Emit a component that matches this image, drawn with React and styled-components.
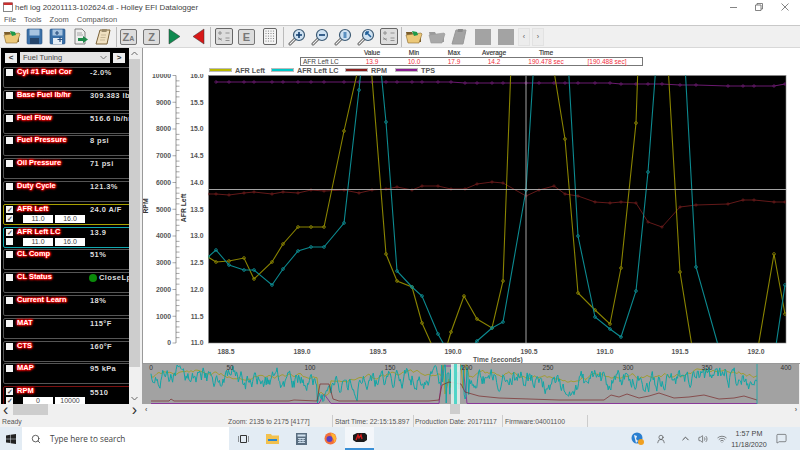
import React from 'react'
import styled, { createGlobalStyle } from 'styled-components'
import { ChevronUp, Volume2, Wifi, MessageSquare, Search, UserRound } from 'lucide-react'

const FONT = '"Liberation Sans", Arial, sans-serif'
const UI_FONT = '"Open Sans", "Noto Sans", sans-serif'

const GlobalStyle = createGlobalStyle`
  html, body { margin: 0; padding: 0; background: #f0f0f0; }
  #root { width: 800px; height: 450px; overflow: hidden; }
`

const Page = styled.div`
  width: 800px;
  height: 450px;
  display: flex;
  flex-direction: column;
  font-family: ${FONT};
  background: #f0f0f0;
  color: #333;
`
const TitleBar = styled.div`
  height: 14px;
  background: #fff;
  display: flex;
  align-items: center;
  padding: 0 2px 0 3px;
  font-size: 7.9px;
  color: #444;
`
const TitleText = styled.span`
  margin-left: 2px;
  flex: 1;
`
const WinButton = styled.div`
  width: 26px;
  height: 14px;
  display: flex;
  align-items: center;
  justify-content: center;
  color: #666;
`
const MenuBar = styled.div`
  height: 11px;
  background: #fff;
  display: flex;
  align-items: center;
  padding-left: 4px;
  gap: 8px;
  font-size: 7.5px;
  color: #555;
`
const Toolbar = styled.div`
  height: 21px;
  background: #f0f0f0;
  border-top: 1px solid #c8c8c8;
  border-bottom: 1px solid #d8d8d8;
  display: flex;
  align-items: center;
  box-sizing: content-box;
`
const ToolButton = styled.div`
  width: 23px;
  height: 20px;
  flex: none;
  display: flex;
  align-items: center;
  justify-content: center;
`
const ToolSep = styled.div`
  width: ${(p) => p.$w}px;
  height: 20px;
  flex: none;
  display: flex;
  justify-content: center;
  &::after {
    content: '';
    width: 1px;
    background: #bbb;
  }
`
const GreyKey = styled.div`
  width: 17px;
  height: 16px;
  box-sizing: border-box;
  border: 1px solid #777;
  border-radius: 2px;
  background: #ddd;
  color: #777;
  font: bold 11px ${FONT};
  display: flex;
  align-items: center;
  justify-content: center;
`
const SmallKeyText = styled.span`
  font-size: 7px;
  margin-top: 4px;
`
const DisabledSquare = styled.div`
  width: 16px;
  height: 16px;
  background: #a3a3a3;
`
const ArrowKey = styled.div`
  width: 12px;
  height: 18px;
  flex: none;
  margin-left: ${(p) => p.$ml}px;
  background: #ececec;
  border: 1px solid #e2e2e2;
  box-sizing: border-box;
  font: 7px ${FONT};
  color: #555;
  display: flex;
  align-items: center;
  justify-content: center;
`
const Body = styled.div`
  height: 367px;
  display: flex;
`
const LeftColumn = styled.div`
  width: 140px;
  flex: none;
  display: flex;
  flex-direction: column;
`
const LeftMain = styled.div`
  flex: 1;
  display: flex;
  min-height: 0;
`
const GaugePanel = styled.div`
  width: 128px;
  margin-left: 1px;
  flex: none;
  background: #000;
  overflow: hidden;
  display: flex;
  flex-direction: column;
`
const GaugeNav = styled.div`
  height: 19px;
  flex: none;
  display: flex;
  align-items: center;
  padding-left: 4px;
  box-sizing: border-box;
`
const NavButton = styled.div`
  width: 12px;
  height: 10px;
  flex: none;
  background: #eee;
  color: #333;
  font: bold 8px ${FONT};
  display: flex;
  align-items: center;
  justify-content: center;
`
const NavSelect = styled.div`
  width: 90px;
  height: 11px;
  margin: 0 3px;
  padding: 0 3px;
  flex: none;
  box-sizing: border-box;
  background: #e4e4e4;
  color: #444;
  font: 7.5px ${FONT};
  display: flex;
  align-items: center;
  justify-content: space-between;
`
const GaugeCard = styled.div`
  width: 135px;
  height: 21px;
  margin: 0 0 1.8px 2px;
  flex: none;
  box-sizing: border-box;
  border: 1px solid ${(p) => p.$border || '#555'};
  border-radius: 2px;
  padding-left: 2px;
  display: grid;
  grid-template-columns: 11px 73px auto;
  grid-template-rows: 10px 9px;
`
const CheckCol = styled.div`
  grid-row: 1 / 3;
  display: flex;
  flex-direction: column;
  gap: 2px;
  padding-top: 1px;
`
const Check = styled.div`
  width: 7px;
  height: 7px;
  background: #f4f4f4;
  color: #555;
  font: bold 7px/7px ${FONT};
  text-align: center;
`
const GaugeLabel = styled.div`
  font: bold 7.5px/8px ${FONT};
  color: #fff;
  white-space: nowrap;
  text-shadow: 0 0 1px #f00, 0 0 1px #f00, 0 0 2px #f00, 0 0 2px #f00, 0 0 3px #f00, 0 0 3px #f00, 0 0 3px #f00;
`
const GaugeValue = styled.div`
  font: bold 7.5px/${(p) => (p.$ranged ? '11px' : '14px')} ${FONT};
  letter-spacing: 0.4px;
  color: #ddd;
  white-space: nowrap;
  display: flex;
  align-items: center;
  gap: 2px;
`
const StatusDot = styled.span`
  width: 8px;
  height: 8px;
  border-radius: 50%;
  background: #0a8a0a;
  margin-left: -1px;
`
const RangeRow = styled.div`
  grid-column: 2 / 4;
  display: flex;
  gap: 2px;
  padding-left: 6px;
`
const RangeBox = styled.div`
  width: 30px;
  height: 8px;
  background: #fff;
  color: #444;
  font: 7px/8px ${FONT};
  text-align: center;
`
const VScroll = styled.div`
  width: 11px;
  flex: none;
  background: #f0f0f0;
  display: flex;
  flex-direction: column;
  align-items: center;
`
const ScrollArrow = styled.div`
  height: 11px;
  flex: none;
  display: flex;
  align-items: center;
  justify-content: center;
  color: #666;
  font: bold 7px ${FONT};
`
const VThumb = styled.div`
  width: 100%;
  height: 308px;
  margin-bottom: auto;
  background: #cdcdcd;
`
const HScroll = styled.div`
  height: 11px;
  flex: none;
  background: #f0f0f0;
  display: flex;
  align-items: center;
  justify-content: space-between;
  padding: 0 3px;
  position: relative;
`
const HThumb = styled.div`
  position: absolute;
  top: 0;
  bottom: 0;
  left: ${(p) => p.$left}px;
  width: ${(p) => p.$w}px;
  background: #cdcdcd;
`
const RightColumn = styled.div`
  flex: 1;
  display: flex;
  flex-direction: column;
  margin-left: 2px;
  min-width: 0;
`
const ChartPane = styled.div`
  height: 316px;
  flex: none;
  background: #fff;
  border-left: 1px solid #999;
  border-bottom: 1px solid #999;
  box-sizing: border-box;
  display: flex;
  flex-direction: column;
`
const StatsHead = styled.div`
  height: 9px;
  flex: none;
  display: flex;
  padding-left: 157px;
  font: 6.5px/9px ${FONT};
  color: #333;
  -webkit-text-stroke: 0.15px #333;
`
const StatCell = styled.div`
  width: ${(p) => p.$w}px;
  flex: none;
  text-align: ${(p) => p.$align || 'center'};
  color: ${(p) => p.$color || 'inherit'};
  padding-left: ${(p) => p.$pl || 0}px;
  box-sizing: border-box;
  white-space: nowrap;
`
const StatBox = styled.div`
  width: 343px;
  height: 9px;
  flex: none;
  margin-left: 157px;
  box-sizing: border-box;
  border: 1px solid #777;
  display: flex;
  align-items: center;
  font: 6.5px/7px ${FONT};
`
const Legend = styled.div`
  height: 8px;
  flex: none;
  padding-left: 66px;
  display: flex;
  align-items: center;
  font: bold 7.2px ${FONT};
  color: #555;
`
const LegendSwatch = styled.span`
  width: 23px;
  height: 4px;
  box-sizing: border-box;
  border: 1px solid #bbb;
  background: ${(p) => p.$color};
  margin-right: 3px;
`
const LegendText = styled.span`
  width: ${(p) => p.$w}px;
`
const ChartSvg = styled.svg`
  display: block;
  flex: none;
  font-family: ${FONT};
`
const Overview = styled.svg`
  display: block;
  flex: none;
  font-family: ${FONT};
`
const OverScroll = styled.div`
  height: 10px;
  flex: none;
  background: #f0f0f0;
  position: relative;
  display: flex;
  align-items: center;
  justify-content: space-between;
  padding: 0 3px;
  font: bold 7px ${FONT};
  color: #666;
`
const StatusBar = styled.div`
  height: 12px;
  flex: none;
  background: #f0f0f0;
  display: flex;
  align-items: center;
  font-size: 6.8px;
  color: #555;
`
const StatusCell = styled.div`
  width: ${(p) => p.$w}px;
  flex: none;
  height: 100%;
  box-sizing: border-box;
  padding-left: ${(p) => p.$pl ?? 3}px;
  border-left: ${(p) => (p.$sep ? '1px solid #ccc' : 'none')};
  display: flex;
  align-items: center;
  white-space: nowrap;
`
const Taskbar = styled.div`
  height: 23px;
  flex: none;
  background: #e3ecf4;
  display: flex;
  align-items: center;
  color: #333;
  font-family: ${UI_FONT};
`
const StartButton = styled.div`
  width: 22px;
  height: 100%;
  flex: none;
  display: flex;
  align-items: center;
  justify-content: center;
`
const SearchBox = styled.div`
  width: 207px;
  height: 100%;
  flex: none;
  background: #fff;
  display: flex;
  align-items: center;
  padding-left: 9px;
  box-sizing: border-box;
  gap: 9px;
  font-size: 8.2px;
  color: #444;
`
const TaskIcon = styled.div`
  width: 29px;
  height: 100%;
  flex: none;
  display: flex;
  align-items: center;
  justify-content: center;
  box-sizing: border-box;
  background: ${(p) => (p.$active ? '#f3f6fa' : 'transparent')};
  border-bottom: ${(p) => (p.$active ? '2px solid #3a8fd6' : 'none')};
`
const Tray = styled.div`
  margin-left: auto;
  height: 100%;
  padding-right: 6px;
  display: flex;
  align-items: center;
  color: #444;
`
const TrayIcon = styled.div`
  width: ${(p) => p.$w || 20}px;
  flex: none;
  display: flex;
  justify-content: ${(p) => p.$justify || 'center'};
`
const Clock = styled.div`
  width: 38px;
  flex: none;
  text-align: center;
  font: 7.2px/11px ${FONT};
  color: #444;
  white-space: nowrap;
`

// ---- chart data, page coordinates
const parse = (s) => s.trim().split(/\s+/).map((p) => p.split(',').map(Number))

const yellowPts = parse(`208,257 216,262 229,261 244,258 254,279 272,262 283,244 298,227 311,227 324,227 344,131
  359,65 371,65 386,254 397,281 412,287 422,323 435,352 445,352 451,332 464,296 477,319 492,328 503,281 511,65
  553,65 565,139 578,293 595,310 610,324 621,268 636,123 638,65 668,65 680,272 695,365 755,365 774,254 785,314`)
const tealPts = parse(`208,257 216,250 229,265 244,270 254,270 272,285 283,269 298,251 311,247 324,247 344,223
  359,90 362,60 380,60 386,122 397,271 412,287 422,296 438,334 447,350 470,350 477,341 492,328 503,322 526,190
  534,60 568,60 578,236 595,317 610,329 621,337 636,291 648,172 656,65 685,65 696,267 720,352 775,352 785,285`)
const redPts = parse(`208,194 216,194 229,195 244,193 254,192 272,194 283,192 298,193 311,190 324,191 344,190 359,193
  372,190 386,189 397,187 412,190 422,186 438,186 451,189 465,189 477,184 492,182 503,183 526,196 539,190 554,186
  565,194 578,196 595,202 610,203 621,202 636,203 648,222 662,227 680,207 696,205 728,204 743,200 754,200 774,202 785,202`)
const purplePts = parse(`216,82 229,82 244,82 254,82 272,82 283,82 298,82 311,82 324,82 344,82 359,82 372,82 386,82
  397,82 412,82 422,82 438,82 451,82 465,83 477,83 492,83 503,83 526,83 539,83 554,83 565,83 578,83 595,83 610,83
  621,84 636,84 648,84 662,84 680,85 696,85 728,86 743,86 754,86 774,86 785,84`)

const series = [
  { key: 'tps', pts: purplePts, color: '#6b1a70', width: 1, r: 1.2 },
  { key: 'rpm', pts: redPts, color: '#6e1c1c', width: 0.9, r: 1.1 },
  { key: 'afr', pts: yellowPts, color: '#8a8400', width: 1.1, r: 1.4 },
  { key: 'lc', pts: tealPts, color: '#0c8a90', width: 1.1, r: 1.4 },
]

const afrTicks = ['16.0', '15.5', '15.0', '14.5', '14.0', '13.5', '13.0', '12.5', '12.0', '11.5', '11.0']
const rpmTicks = [10000, 9000, 8000, 7000, 6000, 5000, 4000, 3000, 2000, 1000, 0]
const timeTicks = [[226, '188.5'], [302, '189.0'], [378, '189.5'], [453, '190.0'], [529, '190.5'], [605, '191.0'], [680, '191.5'], [756, '192.0']]

const PLOT = { x: 208.5, y: 75.5, w: 577.5, h: 267.5 }

const toPoints = (pts) => pts.map((p) => p.join(',')).join(' ')

function Chart() {
  const minor = []
  for (let i = 0; i <= 50; i++) minor.push(i)
  return (
    <ChartSvg width="657" height="289" viewBox="143 74 657 289">
      <defs>
        <clipPath id="plot">
          <rect x={PLOT.x} y={PLOT.y} width={PLOT.w} height={PLOT.h} />
        </clipPath>
      </defs>
      <rect x={PLOT.x} y={PLOT.y} width={PLOT.w} height={PLOT.h} fill="#000" stroke="#888" strokeWidth="0.6" />
      <g clipPath="url(#plot)">
        {series.map((s) => (
          <g key={s.key}>
            <polyline points={toPoints(s.pts)} fill="none" stroke={s.color} strokeWidth={s.width} />
            {s.pts
              .filter((p) => p[1] > 76 && p[1] < 343)
              .map((p, i) => (
                <circle key={i} cx={p[0]} cy={p[1]} r={s.r} fill="none" stroke={s.color} strokeWidth="0.8" />
              ))}
          </g>
        ))}
        <line x1={PLOT.x} x2={PLOT.x + PLOT.w} y1="189.5" y2="189.5" stroke="#b5b5b5" strokeWidth="0.9" />
        <line x1="526" x2="526" y1={PLOT.y} y2={PLOT.y + PLOT.h} stroke="#b5b5b5" strokeWidth="0.9" />
      </g>
      {/* rpm axis with minor ticks */}
      <line x1="176" x2="176" y1={PLOT.y} y2={PLOT.y + PLOT.h} stroke="#555" strokeWidth="0.6" />
      {minor.map((i) => (
        <line
          key={i}
          x1="176"
          x2={i % 5 === 0 ? 172.5 : 179.5}
          y1={PLOT.y + (i * PLOT.h) / 50}
          y2={PLOT.y + (i * PLOT.h) / 50}
          stroke="#555"
          strokeWidth="0.5"
        />
      ))}
      {rpmTicks.map((t, i) => (
        <text key={t} x="171" y={PLOT.y + (i * PLOT.h) / 10 + 2.4} textAnchor="end" fontSize="6.8" fontWeight="bold" fill="#555">
          {t}
        </text>
      ))}
      {afrTicks.map((t, i) => (
        <text key={t} x="203.5" y={PLOT.y + (i * PLOT.h) / 10 + 2.4} textAnchor="end" fontSize="6.8" fontWeight="bold" fill="#555">
          {t}
        </text>
      ))}
      {timeTicks.map(([x, t]) => (
        <text key={t} x={x} y="354" textAnchor="middle" fontSize="6.8" fontWeight="bold" fill="#555">
          {t}
        </text>
      ))}
      <text x="473" y="361.5" fontSize="6.8" fontWeight="bold" fill="#555">
        Time (seconds)
      </text>
      <text transform="translate(147.5 206) rotate(-90)" textAnchor="middle" fontSize="6.8" fontWeight="bold" fill="#333">
        RPM
      </text>
      <text transform="translate(185.5 208) rotate(-90)" textAnchor="middle" fontSize="6.8" fontWeight="bold" fill="#333">
        AFR Left
      </text>
    </ChartSvg>
  )
}

// ---- overview strip, a seeded wobble so it stays the same each load
function wobble(seed) {
  let s = seed
  return () => {
    s = (s * 9301 + 49297) % 233280
    return s / 233280 - 0.5
  }
}

function noisyLine(seed, base, amp, from, to, step) {
  const r = wobble(seed)
  const out = []
  let drift = 0
  for (let x = from; x <= to; x += step) {
    drift = drift * 0.7 + r() * amp
    const wave = Math.sin(x / 17) * 2 + Math.sin(x / 41) * 2.5
    let y = base + drift + wave
    // the big lean spikes
    if (x > 318 && x < 332) y += 14
    if (x > 442 && x < 470) y += r() * 50
    out.push([x, Math.min(403, Math.max(365, y)).toFixed(1)])
  }
  return out
}

const overYellow = noisyLine(11, 376, 4, 152, 758, 2)
const overTeal = noisyLine(97, 380, 14, 152, 758, 0.9)
const overRed = parse(`152,401 170,401 172,399 175,401 290,401 295,400 318,401 321,384 330,384 334,399 340,401 430,401
  440,400 443,385 450,382 462,384 466,392 480,396 500,398 530,399 560,400 590,400 605,400 612,395 620,397 628,394 640,398
  650,396 660,393 675,398 690,397 705,395 720,399 735,398 745,396 758,400`)
const overPurple = parse(`152,403.5 190,403.5 200,403.5 320,403.5 325,394 332,403.5 440,403.5 444,366 464,366 468,403.5 758,403.5`)
const overTicks = [[152, '0'], [231, '50'], [311, '100'], [391, '150'], [468, '200'], [549, '250'], [629, '300'], [708, '350'], [787, '400']]

function OverviewStrip() {
  return (
    <Overview width="657" height="40" viewBox="143 364 657 40">
      <rect x="143" y="364" width="657" height="40" fill="#a2a2a2" />
      <polyline points={toPoints(overPurple)} fill="none" stroke="#8a3a9a" strokeWidth="1" />
      <polyline points={toPoints(overYellow)} fill="none" stroke="#a09a18" strokeWidth="0.8" />
      <polyline points={toPoints(overTeal)} fill="none" stroke="#10a6a6" strokeWidth="1" />
      <polyline points={toPoints(overRed)} fill="none" stroke="#7a2a2a" strokeWidth="0.7" />
      <rect x="452" y="364" width="9" height="40" fill="#e4f4f0" opacity="0.85" />
      <rect x="455" y="364" width="3" height="40" fill="#30d0c0" opacity="0.8" />
      <line x1="758" x2="758" y1="364" y2="404" stroke="#10a6a6" strokeWidth="0.8" />
      {overTicks.map(([x, t]) => (
        <text key={t} x={x} y="370" textAnchor="middle" fontSize="6.5" fill="#333">
          {t}
        </text>
      ))}
    </Overview>
  )
}

// ---- toolbar drawings
const FolderIcon = ({ grey }) => (
  <svg width="18" height="15" viewBox="0 0 18 15">
    <path d="M1 3h6l1 2h8v8H3z" fill={grey ? '#9a9a9a' : '#7a5c2a'} />
    <path d="M1 6l15-2 1 1-3 9H3z" fill={grey ? '#a8a8a8' : '#ecc878'} stroke={grey ? '#999' : '#8a6a30'} strokeWidth="0.6" />
    {!grey && <path d="M7 2l5 1 1 3-4 1z" fill="#1f9a4a" />}
  </svg>
)
const SaveIcon = ({ plus }) => (
  <svg width="17" height="17" viewBox="0 0 17 17">
    <rect x="1" y="1" width="15" height="15" rx="1" fill="#3a70a8" stroke="#2a5080" strokeWidth="0.6" />
    <rect x="3.5" y="1.5" width="10" height="6" fill="#a8c4e0" />
    <rect x="4" y="10" width="9" height="6" fill={plus ? '#e6eef6' : '#26456a'} />
    {plus && <path d="M8 3v4M6 5h4M11 9v5M8.5 11.5h5" stroke="#2a5080" strokeWidth="1.2" />}
  </svg>
)
const ExportIcon = () => (
  <svg width="17" height="17" viewBox="0 0 17 17">
    <path d="M3 1h7l3 3v12H3z" fill="#eee" stroke="#666" strokeWidth="0.8" />
    <path d="M5 5h5M5 7h6" stroke="#888" strokeWidth="0.7" />
    <path d="M6 10h5V8l5 3.5-5 3.5v-2H6z" fill="#1f8a4a" />
  </svg>
)
const ClipboardIcon = ({ grey }) => (
  <svg width="17" height="17" viewBox="0 0 17 17">
    <path d="M5 2h10l-3 14H1z" fill={grey ? '#a3a3a3' : '#f0e0c0'} stroke={grey ? '#999' : '#7a6238'} strokeWidth="1" />
    <path d="M7 1h5l-.5 3h-5z" fill={grey ? '#8a8a8a' : '#9a8a6a'} />
    {!grey && <path d="M6 7h5M5.5 9.5h5M5 12h5" stroke="#b8a888" strokeWidth="0.7" />}
  </svg>
)
const Triangle = ({ color, left }) => (
  <svg width="14" height="17" viewBox="0 0 14 17">
    <path d={left ? 'M13 1v15L2 8.5z' : 'M1 1v15l11-7.5z'} fill={color} stroke="#333" strokeWidth="0.5" />
  </svg>
)
const CalcIcon = () => (
  <svg width="18" height="17" viewBox="0 0 18 17">
    <rect x="0.5" y="0.5" width="17" height="16" rx="1.5" fill="#ddd" stroke="#666" />
    <path d="M3 5h4M5 3v4M10.5 5h4M3 11h4M3.5 9.5l3 3M10.5 10h4M10.5 12.5h4" stroke="#8a8a8a" strokeWidth="0.9" />
  </svg>
)
const DotsIcon = () => (
  <svg width="14" height="17" viewBox="0 0 14 17">
    <rect x="0.5" y="0.5" width="13" height="16" rx="1.5" fill="#f4f4f4" stroke="#666" />
    {[3, 5.5, 8, 10.5, 13].map((y) =>
      [3, 5.5, 8, 10.5].map((x) => <circle key={`${x}-${y}`} cx={x} cy={y} r="0.6" fill="#777" />)
    )}
  </svg>
)
const LensIcon = ({ mark }) => (
  <svg width="18" height="18" viewBox="0 0 18 18">
    <path d="M7 11l-5 5" stroke="#555" strokeWidth="3" strokeLinecap="round" />
    <path d="M7 11l-5 5" stroke="#eee" strokeWidth="1.2" strokeLinecap="round" />
    <circle cx="11" cy="7" r="5.5" fill="#cfe2f2" stroke="#3c5a74" strokeWidth="1.2" />
    {mark === 'plus' && <path d="M8 7h6M11 4v6" stroke="#123f70" strokeWidth="1.6" />}
    {mark === 'minus' && <path d="M8 7h6" stroke="#123f70" strokeWidth="1.6" />}
    {mark === 'fit' && <rect x="9.5" y="4" width="3" height="6" fill="#5a90c0" />}
    {mark === 'arrow' && <path d="M9 4l5 5M9 4h3M9 4v3" stroke="#1f5f9a" strokeWidth="1.6" />}
  </svg>
)

const WinLogo = () => (
  <svg width="10" height="10" viewBox="0 0 10 10">
    <path d="M0 1.4l4.2-.6v3.9H0zM4.7.7L10 0v4.7H4.7zM0 5.2h4.2v3.9L0 8.5zM4.7 5.2H10V10l-5.3-.7z" fill="#222" />
  </svg>
)

const gauges = [
  { label: 'Cyl #1 Fuel Cor', value: '-2.0%' },
  { label: 'Base Fuel lb/hr', value: '309.383 lb/hr' },
  { label: 'Fuel Flow', value: '516.6 lb/hr' },
  { label: 'Fuel Pressure', value: '8 psi' },
  { label: 'Oil Pressure', value: '71 psi' },
  { label: 'Duty Cycle', value: '121.3%' },
  { label: 'AFR Left', value: '24.0 A/F', border: '#a8a000', checks: ['✓', '✓'], range: ['11.0', '16.0'] },
  { label: 'AFR Left LC', value: '13.9', border: '#10a8b0', checks: ['✓', ''], range: ['11.0', '16.0'] },
  { label: 'CL Comp', value: '51%' },
  { label: 'CL Status', value: 'CloseLp', dot: true },
  { label: 'Current Learn', value: '18%' },
  { label: 'MAT', value: '115°F' },
  { label: 'CTS', value: '160°F' },
  { label: 'MAP', value: '95 kPa' },
  { label: 'RPM', value: '5510', border: '#7a1010', checks: ['✓', '✓'], range: ['0', '10000'] },
]

const Gauge = ({ g }) => (
  <GaugeCard $border={g.border}>
    <CheckCol>
      {(g.checks || ['']).map((c, i) => (
        <Check key={i}>{c}</Check>
      ))}
    </CheckCol>
    <GaugeLabel>{g.label}</GaugeLabel>
    <GaugeValue $ranged={!!g.range}>
      {g.dot && <StatusDot />}
      {g.value}
    </GaugeValue>
    {g.range && (
      <RangeRow>
        <RangeBox>{g.range[0]}</RangeBox>
        <RangeBox>{g.range[1]}</RangeBox>
      </RangeRow>
    )}
  </GaugeCard>
)

export default function App() {
  return (
    <Page>
      <GlobalStyle />
      <TitleBar>
        <svg width="10" height="10" viewBox="0 0 10 10">
          <rect x="0.5" y="1" width="9" height="8.5" fill="#fff" stroke="#555" strokeWidth="0.7" />
          <rect x="0.5" y="0.5" width="9" height="2.5" fill="#c83030" />
        </svg>
        <TitleText>hefi log 20201113-102624.dl - Holley EFI Datalogger</TitleText>
        <WinButton>
          <svg width="7" height="7" viewBox="0 0 7 7"><path d="M0 3.5h7" stroke="#666" strokeWidth="0.8" /></svg>
        </WinButton>
        <WinButton>
          <svg width="8" height="8" viewBox="0 0 8 8"><path d="M.5 2h5.5v5.500H.5zM2 2V.5h5.500V6H6" fill="none" stroke="#666" strokeWidth="0.8" /></svg>
        </WinButton>
        <WinButton>
          <svg width="8" height="8" viewBox="0 0 8 8"><path d="M.5.5l7 7M7.500.5l-7 7" stroke="#666" strokeWidth="0.8" /></svg>
        </WinButton>
      </TitleBar>
      <MenuBar>
        <span>File</span>
        <span>Tools</span>
        <span>Zoom</span>
        <span>Comparison</span>
      </MenuBar>
      <Toolbar>
        <ToolButton><FolderIcon /></ToolButton>
        <ToolButton><SaveIcon /></ToolButton>
        <ToolButton><SaveIcon plus /></ToolButton>
        <ToolButton><ExportIcon /></ToolButton>
        <ToolButton><ClipboardIcon /></ToolButton>
        <ToolSep $w={2} />
        <ToolButton><GreyKey>Z<SmallKeyText>A</SmallKeyText></GreyKey></ToolButton>
        <ToolButton><GreyKey>Z</GreyKey></ToolButton>
        <ToolButton><Triangle color="#108a50" /></ToolButton>
        <ToolButton><Triangle color="#d81818" left /></ToolButton>
        <ToolSep $w={3} />
        <ToolButton><CalcIcon /></ToolButton>
        <ToolButton><GreyKey>E</GreyKey></ToolButton>
        <ToolButton><DotsIcon /></ToolButton>
        <ToolSep $w={4} />
        <ToolButton><LensIcon mark="plus" /></ToolButton>
        <ToolButton><LensIcon mark="minus" /></ToolButton>
        <ToolButton><LensIcon mark="fit" /></ToolButton>
        <ToolButton><LensIcon mark="arrow" /></ToolButton>
        <ToolButton><CalcIcon /></ToolButton>
        <ToolSep $w={2} />
        <ToolButton><FolderIcon /></ToolButton>
        <ToolButton><FolderIcon grey /></ToolButton>
        <ToolButton><ClipboardIcon grey /></ToolButton>
        <ToolButton><DisabledSquare /></ToolButton>
        <ToolButton><DisabledSquare /></ToolButton>
        <ArrowKey $ml={1}>‹</ArrowKey>
        <ArrowKey $ml={2}>›</ArrowKey>
      </Toolbar>
      <Body>
        <LeftColumn>
          <LeftMain>
            <GaugePanel>
              <GaugeNav>
                <NavButton>&lt;</NavButton>
                <NavSelect>
                  Fuel Tuning
                  <svg width="7" height="5" viewBox="0 0 7 5"><path d="M.5 1l3 3 3-3" fill="none" stroke="#777" /></svg>
                </NavSelect>
                <NavButton>&gt;</NavButton>
              </GaugeNav>
              {gauges.map((g) => (
                <Gauge key={g.label} g={g} />
              ))}
            </GaugePanel>
            <VScroll>
              <ScrollArrow><svg width="7" height="5" viewBox="0 0 7 5"><path d="M.5 4l3-3 3 3" fill="none" stroke="#666" /></svg></ScrollArrow>
              <VThumb />
              <ScrollArrow><svg width="7" height="5" viewBox="0 0 7 5"><path d="M.5 1l3 3 3-3" fill="none" stroke="#666" /></svg></ScrollArrow>
            </VScroll>
          </LeftMain>
          <HScroll>
            <span>‹</span>
            <HThumb $left={13} $w={35} />
            <span>›</span>
          </HScroll>
        </LeftColumn>
        <RightColumn>
          <ChartPane>
            <StatsHead>
              <StatCell $w={50}>&nbsp;</StatCell>
              <StatCell $w={44}>Value</StatCell>
              <StatCell $w={40}>Min</StatCell>
              <StatCell $w={40}>Max</StatCell>
              <StatCell $w={40}>Average</StatCell>
              <StatCell $w={64}>Time</StatCell>
            </StatsHead>
            <StatBox>
              <StatCell $w={49} $align="left" $pl={2} $color="#444">AFR Left LC</StatCell>
              <StatCell $w={44} $color="#f03040">13.9</StatCell>
              <StatCell $w={40} $color="#f03040">10.0</StatCell>
              <StatCell $w={40} $color="#f03040">17.9</StatCell>
              <StatCell $w={40} $color="#f03040">14.2</StatCell>
              <StatCell $w={64} $color="#f03040">190.478 sec</StatCell>
              <StatCell $w={58} $color="#f03040">[190.488 sec]</StatCell>
            </StatBox>
            <Legend>
              <LegendSwatch $color="#b8b800" />
              <LegendText $w={36}>AFR Left</LegendText>
              <LegendSwatch $color="#00c8c8" />
              <LegendText $w={48}>AFR Left LC</LegendText>
              <LegendSwatch $color="#8b2020" />
              <LegendText $w={24}>RPM</LegendText>
              <LegendSwatch $color="#8a2090" />
              <LegendText $w={20}>TPS</LegendText>
            </Legend>
            <Chart />
          </ChartPane>
          <OverviewStrip />
          <OverScroll>
            <span>‹</span>
            <HThumb $left={308} $w={10} />
            <span>›</span>
          </OverScroll>
        </RightColumn>
      </Body>
      <StatusBar>
        <StatusCell $w={228} $pl={2}>Ready</StatusCell>
        <StatusCell $w={104} $pl={0}>Zoom: 2135 to 2175 [4177]</StatusCell>
        <StatusCell $w={81} $sep $pl={2}>Start Time: 22:15:15.897</StatusCell>
        <StatusCell $w={89} $sep $pl={1}>Production Date: 20171117</StatusCell>
        <StatusCell $w={85} $sep $pl={2}>Firmware:04001100</StatusCell>
        <StatusCell $w={4} $sep />
      </StatusBar>
      <Taskbar>
        <StartButton><WinLogo /></StartButton>
        <SearchBox>
          <Search size={10} color="#444" />
          Type here to search
        </SearchBox>
        <TaskIcon>
          <svg width="11" height="10" viewBox="0 0 11 10"><path d="M2.500 1.500h6v7h-6zM0 2v6M11 2v6" fill="none" stroke="#333" strokeWidth="1" /></svg>
        </TaskIcon>
        <TaskIcon>
          <svg width="13" height="11" viewBox="0 0 13 11"><path d="M0 1h5l1 1.500h7V11H0z" fill="#f2c14e" /><rect x="2" y="6" width="9" height="2" fill="#2a86d0" /></svg>
        </TaskIcon>
        <TaskIcon>
          <svg width="11" height="12" viewBox="0 0 11 12">
            <rect width="11" height="12" fill="#5a6e80" />
            <rect x="1.500" y="1.500" width="8" height="2" fill="#cfe0ee" />
            <path d="M2 5.500h7M2 7.500h7M2 9.500h7M4 5v5M7 5v5" stroke="#cfe0ee" strokeWidth="0.9" />
          </svg>
        </TaskIcon>
        <TaskIcon>
          <svg width="13" height="13" viewBox="0 0 13 13">
            <circle cx="6.500" cy="6.500" r="6" fill="#f2703a" />
            <path d="M6.500 1a5.500 5.500 0 0 1 5.500 5.500c0 2-1 3.500-2.500 4.500 1-2 .5-4-1-5-.5-1.500-1-3-2-5z" fill="#ffb52e" />
            <circle cx="5.500" cy="7" r="3" fill="#5a3fc0" />
          </svg>
        </TaskIcon>
        <TaskIcon $active>
          <svg width="15" height="11" viewBox="0 0 15 11">
            <path d="M1 3l4-2 8 0 2 2v5l-3 2-8 0-3-2z" fill="#1a1a1a" />
            <path d="M4 8l2-5 1 3 2-3 1 4" fill="none" stroke="#d01818" strokeWidth="1.4" />
          </svg>
        </TaskIcon>
        <Tray>
          <TrayIcon $w={14}>
            <svg width="13" height="13" viewBox="0 0 13 13">
              <circle cx="6" cy="6" r="5.500" fill="#2a7fd0" />
              <path d="M3 3l3 1-1 3 2 2-2 2z" fill="#e6f0fa" />
              <circle cx="10" cy="10" r="3" fill="#f0a020" />
            </svg>
          </TrayIcon>
          <TrayIcon $w={34}><UserRound size={10} strokeWidth={1.5} /></TrayIcon>
          <TrayIcon $w={14}><ChevronUp size={11} strokeWidth={2} /></TrayIcon>
          <TrayIcon $w={22}><Volume2 size={10} strokeWidth={1.5} /></TrayIcon>
          <TrayIcon $w={16}><Wifi size={10} strokeWidth={1.5} /></TrayIcon>
          <Clock>
            <div>1:57 PM</div>
            <div>11/18/2020</div>
          </Clock>
          <TrayIcon $w={26}><MessageSquare size={11} strokeWidth={1.3} /></TrayIcon>
        </Tray>
      </Taskbar>
    </Page>
  )
}
